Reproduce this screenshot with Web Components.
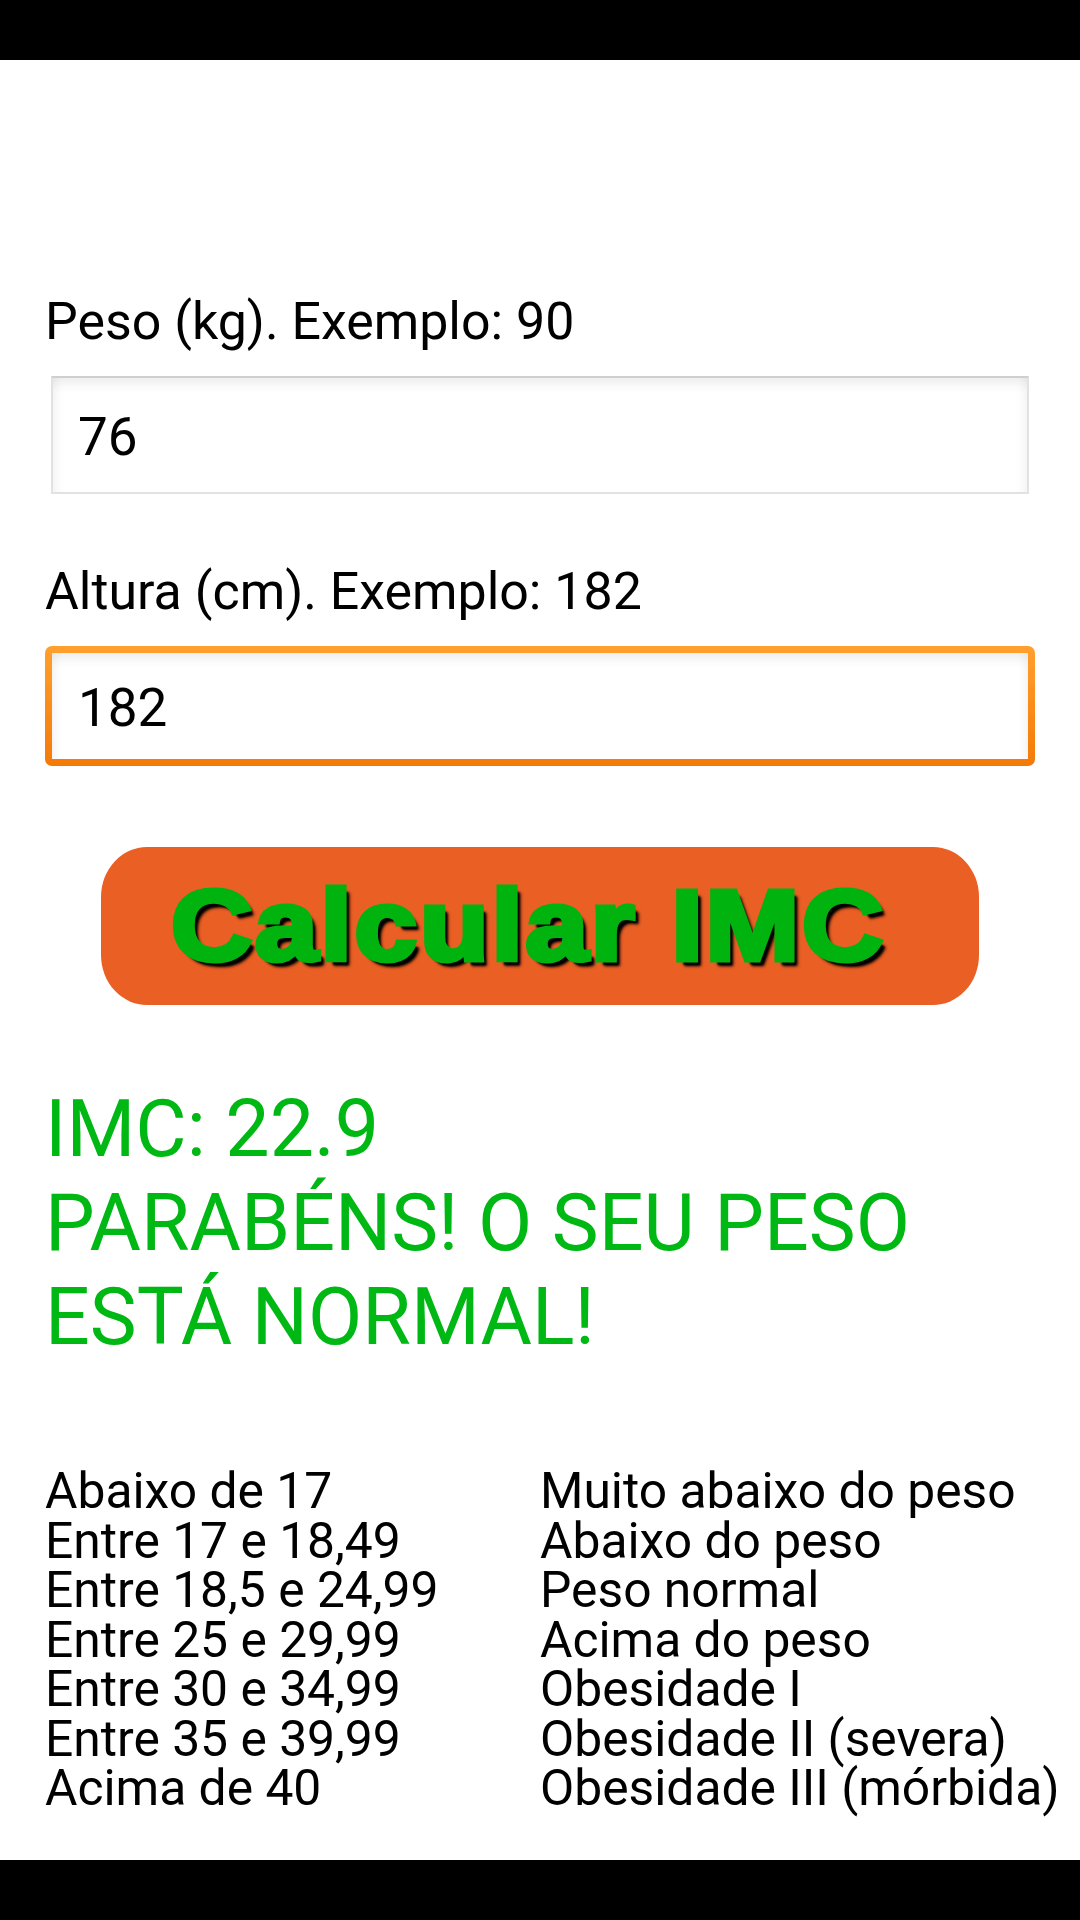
<!DOCTYPE html>
<html lang="pt"><head><meta charset="utf-8"><title>IMC</title>
<style>
html,body{margin:0;padding:0;background:#fff}
body{width:1080px;height:1920px;display:flex;flex-direction:column;font-family:Roboto,"Noto Sans",sans-serif;color:#000;overflow:hidden}
</style></head><body>
<imc-app></imc-app>
<script>
class BlackBar extends HTMLElement{constructor(){super();this.attachShadow({mode:'open'}).innerHTML=`<style>:host{display:block;height:60px;background:#000;flex:none}</style>`}}
customElements.define('black-bar',BlackBar);

class ImcField extends HTMLElement{constructor(){super();const f=this.hasAttribute('focused');this.attachShadow({mode:'open'}).innerHTML=`<style>
:host{display:block;font:inherit}
.label{font-size:51.9px;line-height:58px;height:56px;padding-left:45px;white-space:nowrap}
.wrap{margin-top:27px;margin-left:${f?45:51}px;width:${f?990:978}px;box-sizing:border-box;height:${f?120:118}px;
 display:flex;align-items:center;font-size:53px;line-height:60px;background:#fff;
 ${f?'border:7px solid transparent;border-radius:7px;background:linear-gradient(#fff,#fff) padding-box,linear-gradient(#ffa02e,#f47a08) border-box;':'border:2px solid #e2e2e2;border-top-color:#cfcfcf;'}
 box-shadow:inset 0 14px 14px -10px rgba(0,0,0,.09),inset 14px 0 12px -12px rgba(0,0,0,.06),inset -14px 0 12px -12px rgba(0,0,0,.06);
 padding-left:${f?26:25}px}
.wrap span{display:block;padding-top:3px}
</style><div class="label"><slot name="label"></slot></div><div class="wrap"><span><slot></slot></span></div>`}}
customElements.define('imc-field',ImcField);

class ImcButton extends HTMLElement{constructor(){super();this.attachShadow({mode:'open'}).innerHTML=`<style>
:host{display:block;width:878px;height:158px;margin-left:101px;background:#ea5f24;border-radius:46px/50px;overflow:hidden}
.t{display:block;white-space:nowrap;font-family:"Liberation Sans",Arial,sans-serif;font-weight:700;font-size:100px;line-height:156px;color:#00b30e;
 -webkit-text-stroke:5px #00b30e;letter-spacing:2.5px;text-shadow:5px 6px 3px #000,4px 5px 2px #000;margin-left:70px;transform-origin:0 50%;transform:scaleX(1.125)}
</style><span class="t"><slot></slot></span>`}}
customElements.define('imc-button',ImcButton);

class ImcResult extends HTMLElement{constructor(){super();this.attachShadow({mode:'open'}).innerHTML=`<style>
:host{display:block;font-size:78.9px;line-height:94px;color:#00b814;padding-left:45px;width:960px}
</style><slot></slot>`}}
customElements.define('imc-result',ImcResult);

class ImcTable extends HTMLElement{constructor(){super();this.attachShadow({mode:'open'}).innerHTML=`<style>
:host{display:grid;grid-template-columns:495px auto;padding-left:45px;font-size:49.75px;line-height:49.5px;white-space:nowrap}
</style><slot></slot>`}}
customElements.define('imc-table',ImcTable);

class ImcApp extends HTMLElement{constructor(){super();
const rows=[['Abaixo de 17','Muito abaixo do peso'],['Entre 17 e 18,49','Abaixo do peso'],['Entre 18,5 e 24,99','Peso normal'],['Entre 25 e 29,99','Acima do peso'],['Entre 30 e 34,99','Obesidade I'],['Entre 35 e 39,99','Obesidade II (severa)'],['Acima de 40','Obesidade III (mórbida)']];
this.attachShadow({mode:'open'}).innerHTML=`<style>
:host{display:flex;flex-direction:column;height:1920px;font-family:Roboto,"Noto Sans",sans-serif}
main{flex:1;display:flex;flex-direction:column;padding-top:233px}
imc-field+imc-field{margin-top:69px}
imc-button{margin-top:81px}
imc-result{margin-top:77px}
imc-table{margin-top:103px}
</style>
<black-bar></black-bar>
<main>
<imc-field><span slot="label">Peso (kg). Exemplo: 90</span>76</imc-field>
<imc-field focused><span slot="label">Altura (cm). Exemplo: 182</span>182</imc-field>
<imc-button>Calcular IMC</imc-button>
<imc-result>IMC: 22.9<br>PARABÉNS! O SEU PESO ESTÁ NORMAL!</imc-result>
<imc-table>${rows.map(r=>`<span>${r[0]}</span><span>${r[1]}</span>`).join('')}</imc-table>
</main>
<black-bar></black-bar>`}}
customElements.define('imc-app',ImcApp);
</script>
</body></html>
